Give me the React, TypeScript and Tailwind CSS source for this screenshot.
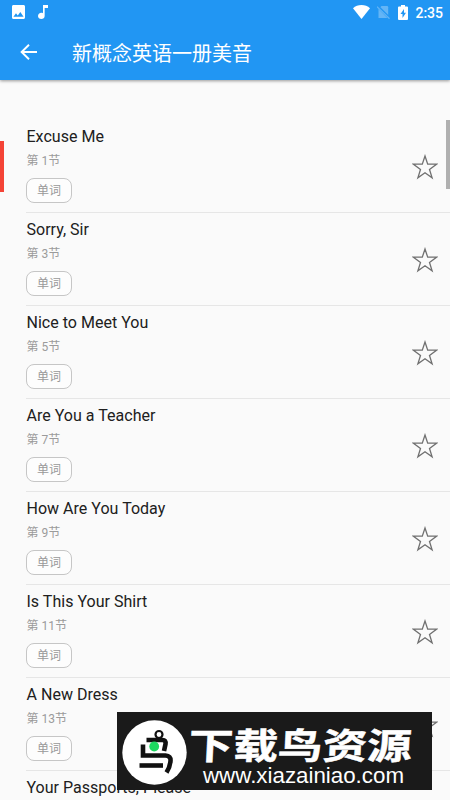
const lessons = [
  { title: 'Excuse Me', no: 1 },
  { title: 'Sorry, Sir', no: 3 },
  { title: 'Nice to Meet You', no: 5 },
  { title: 'Are You a Teacher', no: 7 },
  { title: 'How Are You Today', no: 9 },
  { title: 'Is This Your Shirt', no: 11 },
  { title: 'A New Dress', no: 13 },
];

function StatusBar() {
  return (
    <div className="flex h-6 items-center text-white">
      <svg className="ml-3 h-[14px] w-[13px] shrink-0" viewBox="3 3 18 18" preserveAspectRatio="none" fill="currentColor">
        <path d="M21 19V5c0-1.1-.9-2-2-2H5c-1.1 0-2 .9-2 2v14c0 1.1.9 2 2 2h14c1.1 0 2-.9 2-2zM8.500 13.500l2.500 3.010L14.500 12l4.500 6H5l3.500-4.500z" />
      </svg>
      <svg className="ml-[13px] h-[14px] w-[10px] shrink-0" viewBox="6 3 12 18" preserveAspectRatio="none" fill="currentColor">
        <path d="M12 3v10.550c-.59-.34-1.270-.55-2-.55-2.210 0-4 1.790-4 4s1.790 4 4 4 4-1.790 4-4V7h4V3h-6z" />
      </svg>
      <div className="grow" />
      <svg className="h-[14px] w-[17px]" viewBox="0 0 17 14" fill="currentColor">
        <path d="M8.500 14 0 3.200C2.300 1.200 5.300 0 8.500 0S14.700 1.200 17 3.200z" />
      </svg>
      <svg className="ml-[7px] h-[14px] w-[13px]" viewBox="0 0 13 14">
        <path d="M4.500 1H10q1.200 0 1.200 1.200V13H1.500V4z" fill="#64b5f6" />
        <path d="M.5 1.200 12.500 13.200" stroke="#2196f3" strokeWidth="2.600" />
        <path d="M0 1.600 12.500 13.700" stroke="#64b5f6" strokeWidth="1.200" />
      </svg>
      <svg className="ml-2 h-[15px] w-[10px]" viewBox="0 0 10 15" fill="currentColor">
        <path d="M3 0h4v1.500h2q1 0 1 1V14q0 1-1 1H1q-1 0-1-1V2.500q0-1 1-1h2z" />
        <path d="M6 4 2.500 9h2v4L8 7.700H6z" fill="#2196f3" />
      </svg>
      <span className="ml-[7px] mr-[7px] pt-px text-[14px] leading-none font-medium">2:35</span>
    </div>
  );
}

function LessonTitle({ children }: { children: string }) {
  return (
    <h2 className="pl-[0.5px] text-[16px] leading-5 tracking-[0.02px] whitespace-nowrap text-[#202020]">{children}</h2>
  );
}

function Lesson({ title, no }: { title: string; no: number }) {
  return (
    <li className="ml-[26px] flex h-[93px] shrink-0 items-center border-b border-[#e6e6e6]">
      <div className="grow self-start pt-[7px]">
        <LessonTitle>{title}</LessonTitle>
        <p className="mt-[6px] pl-[0.5px] text-[12px] leading-4 text-[#9b9b9b]">第 {no}节</p>
        <button className="mt-[9px] flex h-[25px] w-[46px] items-center justify-center rounded-[8px] border border-[#c6c6c6] bg-[#fdfdfd] text-[12px] leading-none text-[#999]">
          单词
        </button>
      </div>
      <svg className="mr-3 mt-[2px] h-[26px] w-[26px] shrink-0" viewBox="0 0 26 26" fill="none" stroke="#707070" strokeWidth="1.300">
        <path d="M13 2 15.700 10.200H24.500L17.500 15.400 20.100 23.800 13 18.700 5.900 23.800 8.500 15.400 1.500 10.200H10.300z" />
      </svg>
    </li>
  );
}

function Watermark() {
  return (
    <div className="absolute top-[712px] left-[117px] flex h-[78px] w-[315px] items-center bg-[#1a1a1a] text-white">
      <svg className="ml-[5px] mt-[2px] h-[65px] w-[65px] shrink-0" viewBox="0 0 65 65">
        <circle cx="32.500" cy="32.500" r="32.200" fill="#fff" />
        <g fill="none" stroke="#111" strokeWidth="4.600">
          <path d="M24.500 20H40.500Q44 20 43.500 24L42 31" />
          <path d="M21 24.500V35.500H43.500Q49 36 48.500 41Q48 47 44.500 52.500" />
          <path d="M17.500 45.500H41" />
          <circle cx="37" cy="14.500" r="3.500" strokeWidth="2.200" />
        </g>
        <circle cx="32.200" cy="26.500" r="4.900" fill="#1ed760" />
      </svg>
      <svg className="h-[78px] w-[245px] shrink-0" viewBox="187 712 245 78" fill="#fff">
        <text
          x="0"
          y="0"
          transform="translate(188 758.5) skewX(-3) scale(1.240 1)"
          fontSize="36"
          fontWeight="700"
          stroke="#fff"
          strokeWidth="0.500"
          className="font-['Noto_Sans_CJK_SC',sans-serif]"
        >
          下载鸟资源
        </text>
        <text x="203" y="783" fontSize="22.500" textLength="201" lengthAdjust="spacingAndGlyphs" className="font-['Liberation_Sans',sans-serif]">
          www.xiazainiao.com
        </text>
      </svg>
    </div>
  );
}

export default function App() {
  return (
    <div className="relative flex h-[800px] w-[450px] flex-col overflow-hidden bg-[#fafafa] font-[Roboto,'Noto_Sans_CJK_SC',sans-serif]">
      <header className="h-20 shrink-0 bg-[#2196f3] shadow-[0_1px_3px_rgba(0,0,0,0.4)]">
        <StatusBar />
        <div className="flex h-14 items-center text-white">
          <svg className="ml-5 h-4 w-[17px]" viewBox="0 0 17 16" fill="none" stroke="currentColor" strokeWidth="1.900">
            <path d="M9 .8 1.600 8 9 15.200M1.600 8H17" />
          </svg>
          <h1 className="ml-[35px] pt-[3px] text-[20px] leading-6">新概念英语一册美音</h1>
        </div>
      </header>
      <main className="flex min-h-0 grow items-start pt-10">
        <div className="mt-[21px] -mr-1 h-[51px] w-1 shrink-0 bg-[#f44336]" />
        <ul className="flex h-[680px] w-[450px] shrink-0 flex-col overflow-hidden">
          {lessons.map((lesson) => (
            <Lesson key={lesson.no} {...lesson} />
          ))}
          <li className="ml-[26px] pt-[7px]">
            <LessonTitle>Your Passports, Please</LessonTitle>
          </li>
        </ul>
        <div className="-ml-1 h-[69px] w-[4px] shrink-0 bg-[#b0b0b0]" />
      </main>
      <Watermark />
    </div>
  );
}
